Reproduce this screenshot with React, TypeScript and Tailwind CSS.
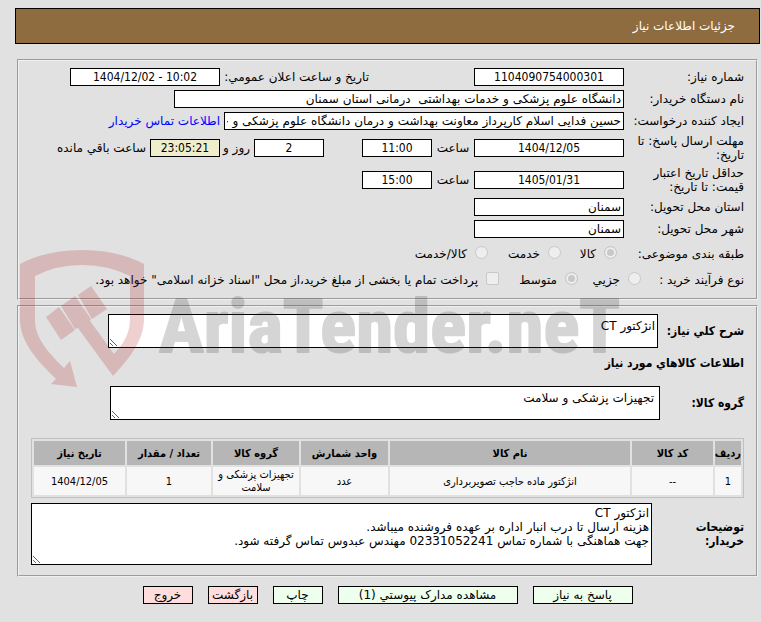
import clsx from 'clsx';

const condensed = "font-['DejaVu_Sans_Condensed','DejaVu_Sans',sans-serif]";

const boxClass = 'h-[18px] border border-black px-0.5 text-xs leading-4 outline-none';

function TextBox({
    id,
    value,
    className,
    numeric,
    shade = 'bg-white',
}: {
    id: string;
    value: string;
    className?: string;
    numeric?: boolean;
    shade?: string;
}) {
    return (
        <input
            id={id}
            type="text"
            readOnly
            dir={numeric ? 'ltr' : 'rtl'}
            defaultValue={value}
            className={clsx(boxClass, shade, numeric && [condensed, 'text-center'], className)}
        />
    );
}

function Row({
    label,
    htmlFor,
    className,
    children,
}: {
    label: string;
    htmlFor: string;
    className?: string;
    children: React.ReactNode;
}) {
    return (
        <div className={clsx('flex items-center', className)}>
            <label htmlFor={htmlFor} className="w-[120px] shrink-0 pl-1.5">
                {label}
            </label>
            {children}
        </div>
    );
}

function Choice({
    type,
    name,
    label,
    checked,
    className,
}: {
    type: 'radio' | 'checkbox';
    name: string;
    label: string;
    checked?: boolean;
    className?: string;
}) {
    return (
        <label className={clsx('flex items-center gap-2 whitespace-nowrap', className)}>
            <input
                type={type}
                name={name}
                defaultChecked={checked}
                disabled
                className={clsx(
                    'mb-1 size-[13px] shrink-0 appearance-none border border-[#c8c8c8] bg-[#eeeeee]',
                    type === 'radio' ? 'rounded-full' : 'rounded-xs',
                    'checked:bg-[#c8c8c8] checked:shadow-[inset_0_0_0_2px_#eeeeee]'
                )}
            />
            {label}
        </label>
    );
}

const columns = [
    { title: 'ردیف', width: 'w-[26px]', value: '1' },
    { title: 'کد کالا', width: 'w-[81px]', value: '--' },
    { title: 'نام کالا', width: 'w-[240px]', value: 'انژکتور ماده حاجب تصویربرداری' },
    { title: 'واحد شمارش', width: 'w-[87px]', value: 'عدد' },
    { title: 'گروه کالا', width: 'w-[86px]', value: 'تجهیزات پزشکی و سلامت' },
    { title: 'تعداد / مقدار', width: 'w-[84px]', value: '1' },
    { title: 'تاریخ نیاز', width: 'w-[91px]', value: '1404/12/05' },
];

const buttons = [
    { text: 'پاسخ به نیاز', style: 'w-[100px] bg-[#eeffee]' },
    { text: 'مشاهده مدارک پیوستي (1)', style: 'w-[180px] bg-[#eeffee]' },
    { text: 'چاپ', style: 'w-[50px] bg-[#eeffee]' },
    { text: 'بازگشت', style: 'w-[50px] bg-[#ffdddd]' },
    { text: 'خروج', style: 'w-[50px] bg-[#ffdddd]' },
];

const fieldsetClass = 'mx-0.5 border-2 border-[#f0f0f0] [border-style:groove] px-3';

function Watermark() {
    return (
        <svg
            viewBox="0 0 610 140"
            className="pointer-events-none absolute top-[249px] left-5 h-[140px] w-[610px]"
            direction="ltr"
            aria-hidden="true"
        >
            <g fill="#af1414" fillOpacity="0.2">
                <path
                    fillRule="evenodd"
                    d="M0 15Q26 1 62 1T124 15V70C124 92 108 111 93 127L58 79 55 80 41 57 55 47 71 70 70 72 94 105C102 96 110 86 110 70V27Q88 16 62 16T15 27V71C15 90 29 104 44 119L50 112 57 138 31 135 36 130C18 112 0 94 0 70Z"
                />
                <path d="M26 68L39 58 55 81 41 91Z" />
                <path d="M58 46L71 37 87 60 72 70Z" />
            </g>
            <text
                x="139"
                y="103"
                fill="#323232"
                stroke="#323232"
                strokeWidth="2"
                strokeLinejoin="round"
                opacity="0.2"
                className="font-['Roboto_Condensed','Roboto',sans-serif] text-[75px] font-bold"
            >
                AriaTender.neT
            </text>
        </svg>
    );
}

export default function App() {
    return (
        <div
            dir="rtl"
            className="relative min-h-screen bg-[#e1e1e1] pt-2 pr-px pb-4 pl-[15px] font-['DejaVu_Sans',sans-serif] text-xs leading-[14px] text-black"
        >
            <header className="flex h-9 items-center border border-black bg-[#8f6c40] px-6 text-white">
                <h1>جزئیات اطلاعات نیاز</h1>
            </header>

            <fieldset className={clsx(fieldsetClass, 'mt-[15px] pt-[5px] pb-1.5')}>
                <Row label="شماره نیاز:" htmlFor="need-no" className="h-[22px]">
                    <TextBox id="need-no" value="1104090754000301" numeric className="w-[150px]" />
                    <label htmlFor="announce" className="mr-[105px] w-[149px] whitespace-nowrap">
                        تاریخ و ساعت اعلان عمومي:
                    </label>
                    <TextBox id="announce" value="1404/12/02 - 10:02" numeric className="w-[150px]" />
                </Row>
                <Row label="نام دستگاه خریدار:" htmlFor="buyer" className="h-[22px]">
                    <TextBox
                        id="buyer"
                        value="دانشگاه علوم پزشکی و خدمات بهداشتی  درمانی استان سمنان"
                        className="w-[450px]"
                    />
                </Row>
                <Row label="ایجاد کننده درخواست:" htmlFor="creator" className="h-[22px]">
                    <TextBox
                        id="creator"
                        value="حسین فدایی اسلام کارپرداز معاونت بهداشت و درمان دانشگاه علوم پزشکی و خدمات بهداشتی  درمانی استان سمنان"
                        className="w-[400px]"
                    />
                    <a href="#contact" className="mr-1 text-[#0000ff]">
                        اطلاعات تماس خریدار
                    </a>
                </Row>
                <Row label="مهلت ارسال پاسخ: تا تاریخ:" htmlFor="deadline" className="h-8">
                    <TextBox id="deadline" value="1404/12/05" numeric className="w-[150px]" />
                    <label htmlFor="deadline-time" className="w-[42px] text-center">
                        ساعت
                    </label>
                    <TextBox id="deadline-time" value="11:00" numeric className="w-[70px]" />
                    <TextBox id="days" value="2" numeric className="mr-[38px] w-[70px]" />
                    <label htmlFor="days" className="w-[34px] pr-1 whitespace-nowrap">
                        روز و
                    </label>
                    <TextBox id="left" value="23:05:21" numeric shade="bg-[#eeeecc]" className="w-[70px]" />
                    <label htmlFor="left" className="mr-1">
                        ساعت باقي مانده
                    </label>
                </Row>
                <Row label="حداقل تاریخ اعتبار قیمت: تا تاریخ:" htmlFor="valid" className="h-8">
                    <TextBox id="valid" value="1405/01/31" numeric className="w-[150px]" />
                    <label htmlFor="valid-time" className="w-[42px] text-center">
                        ساعت
                    </label>
                    <TextBox id="valid-time" value="15:00" numeric className="w-[70px]" />
                </Row>
                <Row label="استان محل تحویل:" htmlFor="province" className="h-[22px]">
                    <TextBox id="province" value="سمنان" className="w-[150px]" />
                </Row>
                <Row label="شهر محل تحویل:" htmlFor="city" className="h-[22px]">
                    <TextBox id="city" value="سمنان" className="w-[150px]" />
                </Row>
                <div role="radiogroup" aria-label="طبقه بندی موضوعی" className="flex h-7 items-center">
                    <span className="w-[127px]">طبقه بندی موضوعی:</span>
                    <Choice type="radio" name="subject" label="کالا" checked className="w-14" />
                    <Choice type="radio" name="subject" label="خدمت" className="w-[73px]" />
                    <Choice type="radio" name="subject" label="کالا/خدمت" />
                </div>
                <div role="radiogroup" aria-label="نوع فرآیند خرید" className="flex h-6 items-center">
                    <span className="w-[103px]">نوع فرآیند خرید :</span>
                    <Choice type="radio" name="process" label="جزيي" className="w-[63px]" />
                    <Choice type="radio" name="process" label="متوسط" checked className="w-[79px]" />
                    <Choice
                        type="checkbox"
                        name="treasury"
                        label={'پرداخت تمام یا بخشی از مبلغ خرید،از محل "اسناد خزانه اسلامی" خواهد بود.'}
                    />
                </div>
            </fieldset>

            <fieldset className={clsx(fieldsetClass, 'mt-[5px] pt-[7px] pb-2.5')}>
                <div className="flex items-center">
                    <label htmlFor="summary" className={clsx(condensed, 'w-[86px] shrink-0 font-bold')}>
                        شرح کلي نیاز:
                    </label>
                    <textarea
                        id="summary"
                        readOnly
                        defaultValue="انژکتور CT"
                        className="block h-[34px] w-[550px] border border-black bg-white px-0.5 pt-1"
                    />
                </div>
                <h2 className={clsx(condensed, 'mt-2 font-bold')}>اطلاعات کالاهاي مورد نیاز</h2>
                <div className="mt-4 flex items-center">
                    <label htmlFor="group" className={clsx(condensed, 'w-[84px] shrink-0 font-bold')}>
                        گروه کالا:
                    </label>
                    <textarea
                        id="group"
                        readOnly
                        defaultValue="تجهیزات پزشکی و سلامت"
                        className="block h-[34px] w-[550px] border border-black bg-white px-[5px] pt-1"
                    />
                </div>

                <table
                    className={clsx(
                        condensed,
                        'mt-[18px] w-full table-fixed border-separate border-spacing-0.5 border border-[#c0c0c0] text-center text-[11px] leading-[13px]'
                    )}
                >
                    <thead>
                        <tr className="h-6">
                            {columns.map((col) => (
                                <th key={col.title} className={clsx('bg-[#b6b6b6] whitespace-nowrap', col.width)}>
                                    {col.title}
                                </th>
                            ))}
                        </tr>
                    </thead>
                    <tbody>
                        <tr className="h-7">
                            {columns.map((col) => (
                                <td key={col.title} className="bg-[#f7f7f7]">
                                    {col.value}
                                </td>
                            ))}
                        </tr>
                    </tbody>
                </table>

                <div className="mt-[5px] flex items-center">
                    <label htmlFor="notes" className={clsx(condensed, 'w-[92px] shrink-0 pl-2 font-bold')}>
                        توضیحات خریدار:
                    </label>
                    <textarea
                        id="notes"
                        readOnly
                        defaultValue={
                            'انژکتور CT\nهزینه ارسال تا درب انبار اداره بر عهده فروشنده میباشد.\nجهت هماهنگی با شماره تماس 02331052241 مهندس عبدوس تماس گرفته شود.'
                        }
                        className="block h-[62px] flex-1 border border-black bg-white px-0.5 pt-0.5"
                    />
                </div>
            </fieldset>

            <div className="mt-[9px] flex justify-center gap-[15px]">
                {buttons.map((button) => (
                    <button
                        key={button.text}
                        type="button"
                        className={clsx('h-[18px] border border-black leading-4 whitespace-nowrap', button.style)}
                    >
                        {button.text}
                    </button>
                ))}
            </div>

            <Watermark />
        </div>
    );
}
